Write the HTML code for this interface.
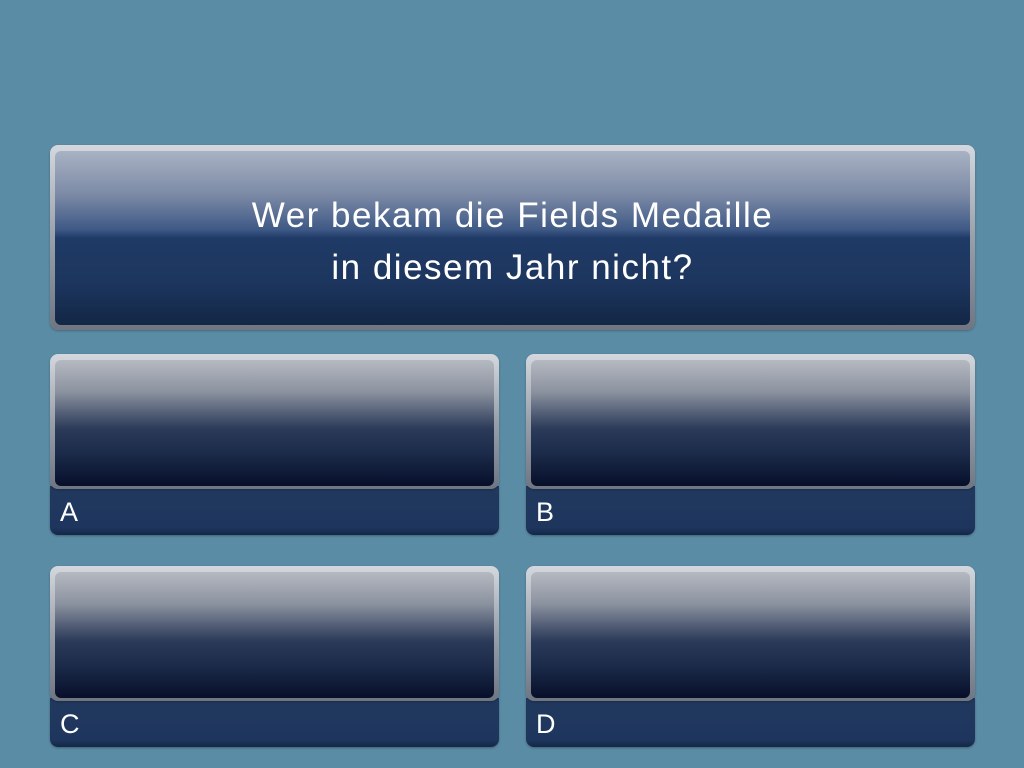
<!DOCTYPE html>
<html><head><meta charset="utf-8"><style>
body{margin:0;width:1024px;height:768px;background:#5b8ca5;position:relative;overflow:hidden;font-family:"Liberation Sans",sans-serif}
.frame{position:absolute;border-radius:8px;background:linear-gradient(#d4d8de,#9aa0aa 50%,#6f7682);box-shadow:0 1px 2px rgba(0,0,0,.25)}
.inner{position:absolute;left:5px;top:6px;right:5px;bottom:5px;border-radius:6px}
.q .inner{background:linear-gradient(#a9b2c4 0%,#7c8aa6 25%,#3f5a86 45%,#1f3a66 50%,#1d365f 75%,#132746 100%)}
.a .inner{background:linear-gradient(#b5b9c1 0%,#8c93a0 25%,#4a5670 45%,#2a3a58 55%,#1a2a48 75%,#070f2a 100%);bottom:3px}
.strip{position:absolute;border-radius:0 0 8px 8px;background:linear-gradient(#22395f,#1e355d 85%,#142748);color:#fff;font-size:27px;box-shadow:0 1px 2px rgba(0,0,0,.3)}
.strip span{position:absolute;left:10px;top:11px}
.qt{position:absolute;left:55px;width:915px;top:190px;text-align:center;color:#fff;font-size:35px;letter-spacing:1.5px;line-height:52px}
</style></head><body>
<div class="frame q" style="left:50px;top:145px;width:925px;height:185px"><div class="inner"></div></div>
<div class="qt">Wer bekam die Fields Medaille<br>in diesem Jahr nicht?</div>

<div class="strip" style="left:50px;top:486px;width:449px;height:49px"><span>A</span></div>
<div class="frame a" style="left:50px;top:354px;width:449px;height:135px"><div class="inner"></div></div>

<div class="strip" style="left:526px;top:486px;width:449px;height:49px"><span>B</span></div>
<div class="frame a" style="left:526px;top:354px;width:449px;height:135px"><div class="inner"></div></div>

<div class="strip" style="left:50px;top:698px;width:449px;height:49px"><span>C</span></div>
<div class="frame a" style="left:50px;top:566px;width:449px;height:135px"><div class="inner"></div></div>

<div class="strip" style="left:526px;top:698px;width:449px;height:49px"><span>D</span></div>
<div class="frame a" style="left:526px;top:566px;width:449px;height:135px"><div class="inner"></div></div>
</body></html>
